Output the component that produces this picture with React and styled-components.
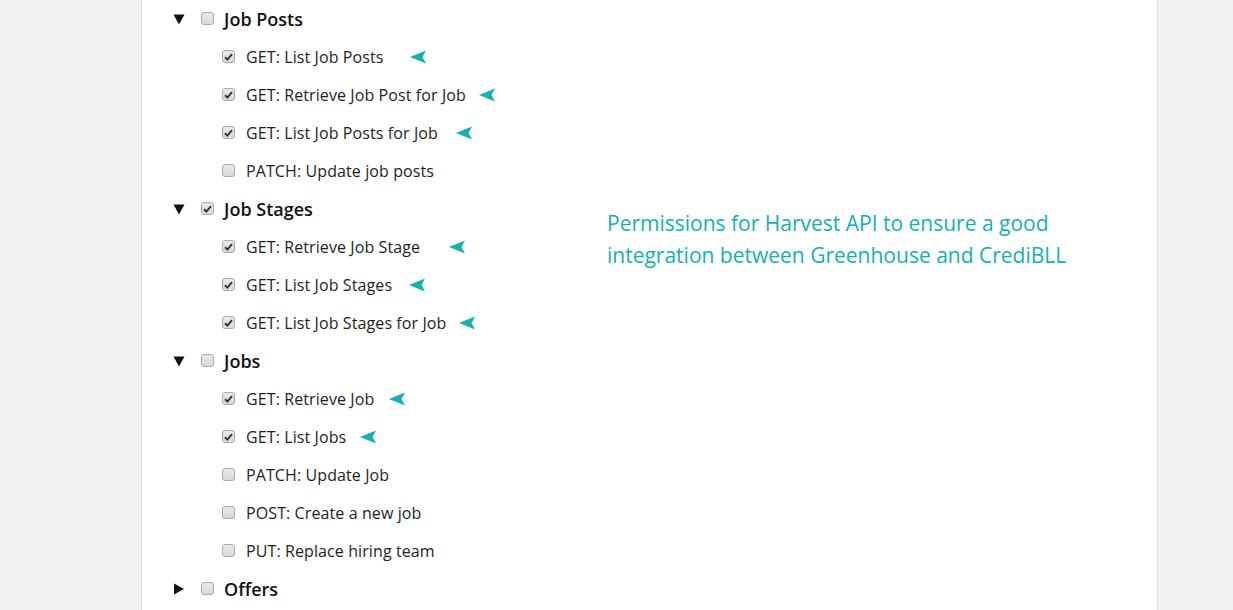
import React from "react";
import styled, { createGlobalStyle } from "styled-components";

const Global = createGlobalStyle`
  html, body { margin: 0; padding: 0; }
  body {
    background: #f2f2f2;
    font-family: "Open Sans", "Noto Sans", sans-serif;
    color: #1e1e1e;
    overflow: hidden;
  }
`;

const Page = styled.div`
  height: 610px;
  display: flex;
`;

const Panel = styled.main`
  margin-left: 141px;
  width: 1017px;
  height: 100%;
  background: #ffffff;
  border-left: 1px solid #dcdcdc;
  border-right: 1px solid #dcdcdc;
  display: flex;
  padding-left: 31px;
  box-sizing: border-box;
`;

const Tree = styled.ul`
  list-style: none;
  margin: 0;
  padding: 0;
  width: 434px;
  display: flex;
  flex-direction: column;
`;

const Row = styled.li`
  height: 38px;
  display: flex;
  align-items: center;
  padding-left: ${(p) => (p.$child ? "49px" : "0")};
`;

const Toggle = styled.span`
  width: 12px;
  height: 12px;
  display: flex;
  align-items: center;
  justify-content: center;
  margin-right: 16px;
  margin-top: -1px;
`;

const Box = styled.span`
  width: 11px;
  height: 11px;
  border: 1px solid #ababab;
  border-radius: 3px;
  background: linear-gradient(#e9e9e9, #d9d9d9);
  display: flex;
  align-items: center;
  justify-content: center;
  margin-right: ${(p) => (p.$child ? "11px" : "10px")};
  flex: none;
  margin-top: -1px;
`;

const GroupLabel = styled.span`
  font-size: 18px;
  font-weight: 600;
  color: #111;
`;

const ItemLabel = styled.span`
  font-size: 16px;
  letter-spacing: 0.1px;
  color: #1e1e1e;
`;

const Pointer = styled.svg`
  margin-left: ${(p) => p.$gap}px;
  flex: none;
  margin-top: -1px;
`;

const Note = styled.p`
  margin: 0;
  padding-top: 207px;
  font-size: 21px;
  line-height: 32px;
  color: #12b2b2;
  width: 480px;
`;

const tree = [
  {
    name: "Job Posts",
    open: true,
    checked: false,
    items: [
      { name: "GET: List Job Posts", checked: true, gap: 26 },
      { name: "GET: Retrieve Job Post for Job", checked: true, gap: 13 },
      { name: "GET: List Job Posts for Job", checked: true, gap: 18 },
      { name: "PATCH: Update job posts", checked: false },
    ],
  },
  {
    name: "Job Stages",
    open: true,
    checked: true,
    items: [
      { name: "GET: Retrieve Job Stage", checked: true, gap: 29 },
      { name: "GET: List Job Stages", checked: true, gap: 17 },
      { name: "GET: List Job Stages for Job", checked: true, gap: 13 },
    ],
  },
  {
    name: "Jobs",
    open: true,
    checked: false,
    items: [
      { name: "GET: Retrieve Job", checked: true, gap: 15 },
      { name: "GET: List Jobs", checked: true, gap: 14 },
      { name: "PATCH: Update Job", checked: false },
      { name: "POST: Create a new job", checked: false },
      { name: "PUT: Replace hiring team", checked: false },
    ],
  },
  { name: "Offers", open: false, checked: false, items: [] },
];

function Check({ checked, child }) {
  return (
    <Box $child={child}>
      {checked && (
        <svg width="9" height="8" viewBox="0 0 9 8">
          <path d="M1 4.2 L3.4 6.5 L8 1.2" fill="none" stroke="#333" strokeWidth="1.9" />
        </svg>
      )}
    </Box>
  );
}

function Caret({ open }) {
  return (
    <Toggle>
      <svg width="12" height="12" viewBox="0 0 12 12">
        {open ? (
          <path d="M0.5 1.5 H11.5 L6 11.5 Z" fill="#111" />
        ) : (
          <path d="M1 0.5 V11.5 L11 6 Z" fill="#111" />
        )}
      </svg>
    </Toggle>
  );
}

export default function App() {
  return (
    <>
      <Global />
      <Page>
        <Panel>
          <Tree>
            {tree.map((g) => (
              <React.Fragment key={g.name}>
                <Row>
                  <Caret open={g.open} />
                  <Check checked={g.checked} />
                  <GroupLabel>{g.name}</GroupLabel>
                </Row>
                {g.open &&
                  g.items.map((it) => (
                    <Row $child key={it.name}>
                      <Check checked={it.checked} child />
                      <ItemLabel>{it.name}</ItemLabel>
                      {it.gap && (
                        <Pointer $gap={it.gap} width="16" height="14" viewBox="0 0 16 14">
                          <path d="M0 7 L16 0.5 L12.5 7 L16 13.5 Z" fill="#12b2b2" />
                        </Pointer>
                      )}
                    </Row>
                  ))}
              </React.Fragment>
            ))}
          </Tree>
          <Note>
            Permissions for Harvest API to ensure a good integration between Greenhouse and
            CrediBLL
          </Note>
        </Panel>
      </Page>
    </>
  );
}
